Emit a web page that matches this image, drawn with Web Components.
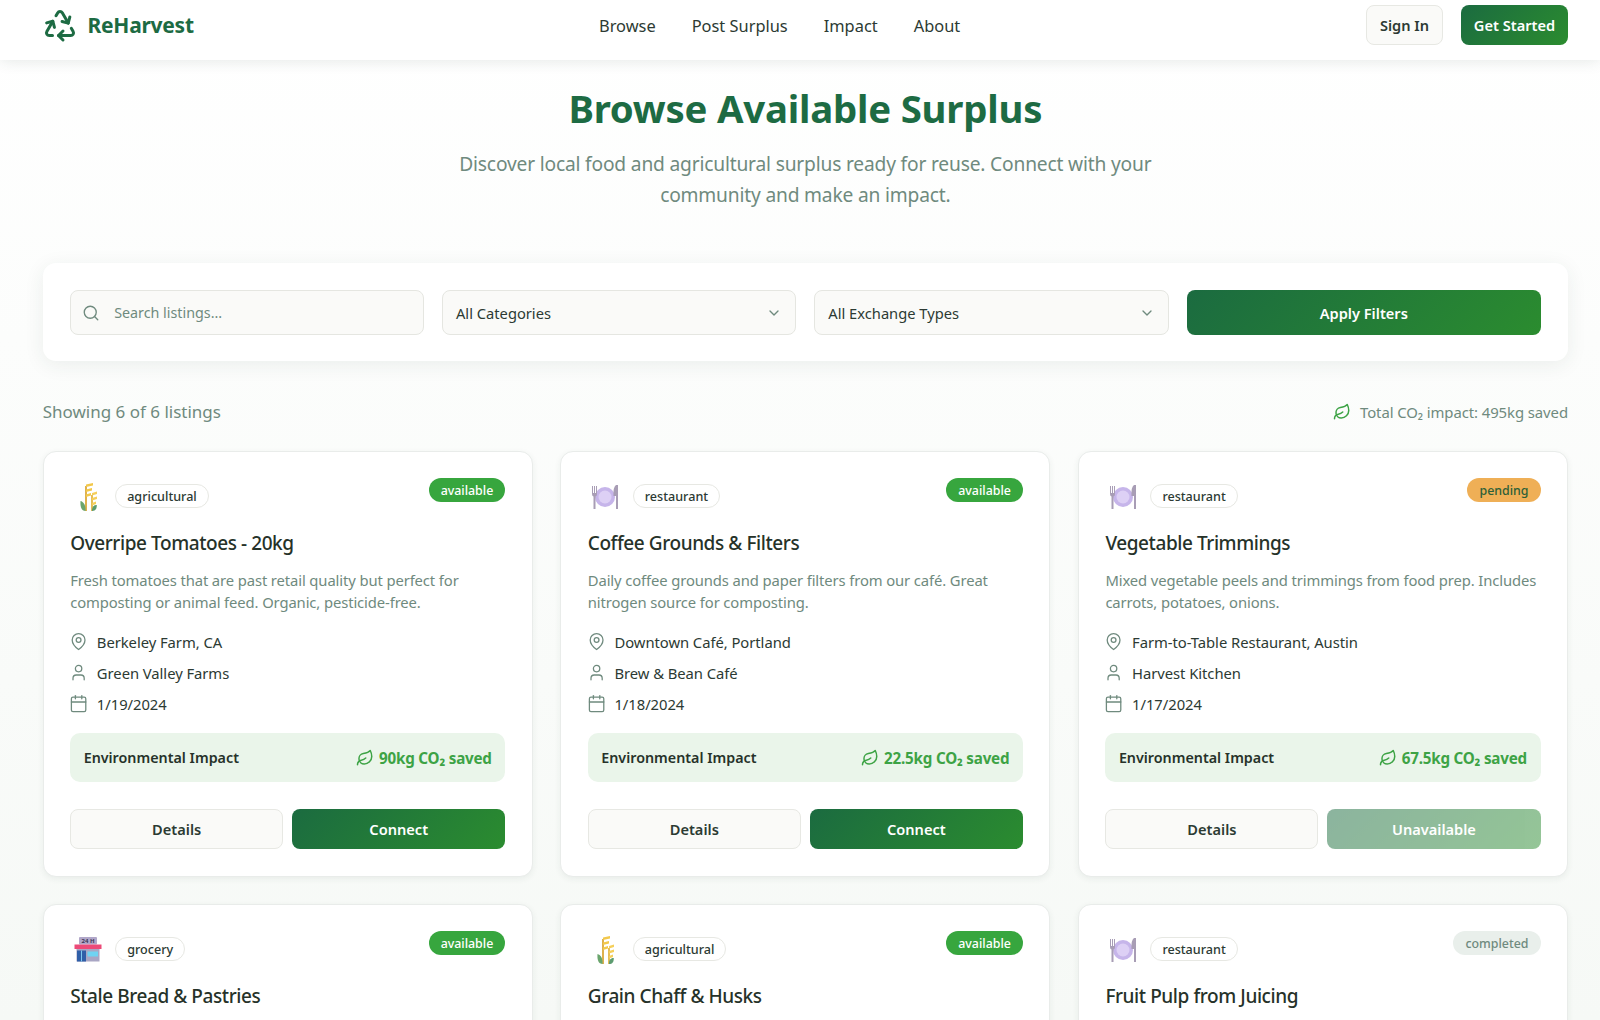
<!DOCTYPE html>
<html lang="en"><head><meta charset="utf-8"><title>ReHarvest</title>
<style>
html,body{margin:0;height:1020px;overflow:hidden}
body{font-family:"Noto Sans","Open Sans",sans-serif;color:#2c3a33;background:linear-gradient(180deg,#fff 0,#f6f9f6 1020px)}
main{display:block;padding:0 32px 0 42.67px}
</style></head><body>
<app-header></app-header>
<main>
<hero-section></hero-section>
<filter-bar></filter-bar>
<results-summary></results-summary>
<listing-grid>
<listing-card kind="wheat" category="agricultural" status="available" name="Overripe Tomatoes - 20kg" desc="Fresh tomatoes that are past retail quality but perfect for composting or animal feed. Organic, pesticide-free." place="Berkeley Farm, CA" owner="Green Valley Farms" date="1/19/2024" co2="90kg"></listing-card>
<listing-card kind="plate" category="restaurant" status="available" name="Coffee Grounds &amp; Filters" desc="Daily coffee grounds and paper filters from our café. Great nitrogen source for composting." place="Downtown Café, Portland" owner="Brew &amp; Bean Café" date="1/18/2024" co2="22.5kg"></listing-card>
<listing-card kind="plate" category="restaurant" status="pending" name="Vegetable Trimmings" desc="Mixed vegetable peels and trimmings from food prep. Includes carrots, potatoes, onions." place="Farm-to-Table Restaurant, Austin" owner="Harvest Kitchen" date="1/17/2024" co2="67.5kg"></listing-card>
<listing-card kind="store" category="grocery" status="available" name="Stale Bread &amp; Pastries" partial></listing-card>
<listing-card kind="wheat" category="agricultural" status="available" name="Grain Chaff &amp; Husks" partial></listing-card>
<listing-card kind="plate" category="restaurant" status="completed" name="Fruit Pulp from Juicing" partial></listing-card>
</listing-grid>
</main>
<script>
const P={
recycle:'<path d="M7 19H4.815a1.83 1.83 0 0 1-1.57-.881 1.785 1.785 0 0 1-.004-1.784L7.196 9.5"/><path d="M11 19h8.203a1.83 1.83 0 0 0 1.556-.89 1.784 1.784 0 0 0 0-1.775l-1.226-2.12"/><path d="m14 16-3 3 3 3"/><path d="M8.293 13.596 7.196 9.5 3.1 10.598"/><path d="m9.344 5.811 1.093-1.892A1.83 1.83 0 0 1 11.985 3a1.784 1.784 0 0 1 1.546.888l3.943 6.843"/><path d="m13.378 9.633 4.096 1.098 1.097-4.096"/>',
leaf:'<path d="M11 20A7 7 0 0 1 9.8 6.1C15.5 5 17 4.48 19 2c1 2 2 4.18 2 8 0 5.5-4.78 10-10 10Z"/><path d="M2 21c0-3 1.85-5.36 5.08-6C9.5 14.52 12 13 13 12"/>',
pin:'<path d="M20 10c0 6-8 12-8 12s-8-6-8-12a8 8 0 0 1 16 0Z"/><circle cx="12" cy="10" r="3"/>',
user:'<path d="M19 21v-2a4 4 0 0 0-4-4H9a4 4 0 0 0-4 4v2"/><circle cx="12" cy="7" r="4"/>',
cal:'<path d="M8 2v4"/><path d="M16 2v4"/><rect width="18" height="18" x="3" y="4" rx="2"/><path d="M3 10h18"/>',
search:'<circle cx="11" cy="11" r="8"/><path d="m21 21-4.3-4.3"/>',
chev:'<path d="m6 9 6 6 6-6"/>'};
const ic=(n,s,c,w=2)=>`<svg width="${s}" height="${s}" viewBox="0 0 24 24" fill="none" stroke="${c}" stroke-width="${w}" stroke-linecap="round" stroke-linejoin="round" style="flex:none;display:block">${P[n]}</svg>`;
const EMOJI={
wheat:`<svg width="32" height="32" viewBox="0 0 32 32" style="display:block"><path d="M14 30V5" stroke="#dba93a" stroke-width="1.800"/><path d="M20 30V14" stroke="#e2b646" stroke-width="1.800"/><path d="M14 3.500l7-1.500v2.600l-7 1.500zM14 8.500l6-1.500v2.600l-6 1.500zM14 13.500l5-1.500v2.600l-5 1.500z" fill="#f2c84b"/><path d="M20 12l5-1.500v2.600l-5 1.500zM20 17l5-1.500v2.600l-5 1.500zM20 22l4-1.500v2.600l-4 1.500z" fill="#f5cf5a"/><path d="M13.500 30c-4 0-5.500-4-5-10 3 .8 5.500 4 5 10z" fill="#6aa56d"/><path d="M20 30c3.500 0 4.800-2 4.800-6-3-.2-5 2-4.800 6z" fill="#5d9c70"/></svg>`,
plate:`<svg width="32" height="32" viewBox="0 0 32 32" style="display:block"><circle cx="16" cy="16" r="10" fill="#c6b5ea"/><circle cx="16" cy="16" r="6.500" fill="#ddd0f5"/><path d="M3 5v8q0 2 1.500 2.500V28h2V15.500Q8 15 8 13V5H7v7H6V5H5v7H4V5z" fill="#a89db5"/><path d="M27 4q-3 2-2.500 11H27v13h2V4z" fill="#a89db5"/></svg>`,
store:`<svg width="32" height="32" viewBox="0 0 32 32" style="display:block"><rect x="7" y="3" width="18" height="7.500" rx="1" fill="#b1a7c9"/><text x="16" y="9" text-anchor="middle" font-family="Noto Sans,sans-serif" font-weight="700" font-size="6" fill="#3f3556">24 H</text><rect x="2.500" y="10.500" width="27" height="4.500" fill="#ec4a78"/><rect x="4.500" y="15" width="23" height="12.500" fill="#a9a6c4"/><rect x="5" y="16.500" width="9" height="11" fill="#2f5fa8"/><rect x="9" y="16.500" width="1" height="11" fill="#7fc8ee"/><rect x="15.500" y="17.500" width="10.500" height="5" fill="#6fd3f2"/></svg>`};
function def(name,cls){customElements.define(name,cls)}
function shadow(el,html){el.attachShadow({mode:'open'}).innerHTML=html}
const GRAD='linear-gradient(135deg,#1b6b40,#2b8c2f)';

def('rh-button',class extends HTMLElement{constructor(){super();shadow(this,`<style>
:host{display:flex;align-items:center;justify-content:center;box-sizing:border-box;border-radius:8px;font-size:14.600px;font-weight:600;height:40px;white-space:nowrap}
:host([variant=primary]){background:${GRAD};color:#fff}
:host([variant=ghost]){background:#fafaf8;border:1px solid #e7e8e3;color:#2c3a33}
:host([variant=muted]){background:${GRAD};opacity:.5;color:#fff}
</style><slot></slot>`)}});

def('app-header',class extends HTMLElement{constructor(){super();shadow(this,`<style>
:host{display:flex;align-items:center;height:60px;background:#fff;padding:0 32px 11px 42px;box-shadow:0 1px 14px rgba(40,70,55,.12);position:relative;box-sizing:border-box}
.logo{display:flex;align-items:center;gap:9.500px;color:#1d6b43;font-weight:700;font-size:21px;letter-spacing:-.25px;width:557px;flex:none;margin-top:1px}
nav{display:flex;gap:36px;font-size:16.400px;color:#2c3a33;margin-top:2px}
.act{display:flex;gap:18px;margin-left:auto}
.si{width:77px}.gs{width:107px}
</style><div class="logo">${ic('recycle',36,'#1d6b43',2)}<span>ReHarvest</span></div>
<nav><span>Browse</span><span>Post Surplus</span><span>Impact</span><span>About</span></nav>
<div class="act"><rh-button class="si" variant="ghost">Sign In</rh-button><rh-button class="gs" variant="primary">Get Started</rh-button></div>`)}});

def('hero-section',class extends HTMLElement{constructor(){super();shadow(this,`<style>
:host{display:block;text-align:center;padding-top:20px;height:203px;box-sizing:border-box}
h1{margin:0;font-size:38.400px;line-height:56px;font-weight:700;color:#1d6b43;letter-spacing:-.23px}
p{margin:12px auto 0;width:720px;font-size:19.200px;line-height:31px;color:#6f8a7e;letter-spacing:-.18px}
</style><h1>Browse Available Surplus</h1><p>Discover local food and agricultural surplus ready for reuse. Connect with your community and make an impact.</p>`)}});

def('filter-bar',class extends HTMLElement{constructor(){super();shadow(this,`<style>
:host{display:grid;grid-template-columns:repeat(4,1fr);gap:18px;background:#fff;border-radius:13px;padding:27px;height:98px;box-sizing:border-box;box-shadow:0 4px 20px rgba(40,70,55,.08)}
.f{display:flex;align-items:center;box-sizing:border-box;height:45px;border:1px solid #e5e6e1;border-radius:8px;background:#fafaf8;font-size:14.700px;padding:0 13px;color:#2c3a33;justify-content:space-between}
.s{justify-content:flex-start;gap:14px;color:#6f8a7e;font-size:14.300px}
.s svg{margin-left:-1.500px}
rh-button{height:45px}
</style><div class="f s">${ic('search',18,'#6f8a7e',1.800)}<span>Search listings...</span></div>
<div class="f"><span>All Categories</span>${ic('chev',16,'#6f8a7e')}</div>
<div class="f"><span>All Exchange Types</span>${ic('chev',16,'#6f8a7e')}</div>
<rh-button variant="primary">Apply Filters</rh-button>`)}});

def('results-summary',class extends HTMLElement{constructor(){super();shadow(this,`<style>
:host{display:flex;align-items:center;justify-content:space-between;height:90px;padding-top:11px;box-sizing:border-box;color:#6f8a7e;font-size:17px}
.r{display:flex;align-items:center;gap:9px;font-size:14.900px;letter-spacing:-.08px}
</style><span>Showing 6 of 6 listings</span><span class="r">${ic('leaf',18,'#3da345')}<span>Total CO₂ impact: 495kg saved</span></span>`)}});

def('listing-grid',class extends HTMLElement{constructor(){super();shadow(this,`<style>
:host{display:grid;grid-template-columns:repeat(3,1fr);gap:27px 27.500px}
</style><slot></slot>`)}});

def('listing-card',class extends HTMLElement{connectedCallback(){
const a=n=>this.getAttribute(n)||'';
const st=a('status'),partial=this.hasAttribute('partial');
const rest=partial?'':`<p>${a('desc')}</p>
<div class="m"><div>${ic('pin',19.200,'#6f8a7e',1.600)}<span>${a('place')}</span></div><div>${ic('user',19.200,'#6f8a7e',1.600)}<span>${a('owner')}</span></div><div>${ic('cal',19.200,'#6f8a7e',1.600)}<span>${a('date')}</span></div></div>
<div class="imp"><span class="l">Environmental Impact</span><span class="v">${ic('leaf',18,'#3da345')}<span>${a('co2')} CO₂ saved</span></span></div>
<div class="b"><rh-button variant="ghost">Details</rh-button><rh-button variant="${st==='available'?'primary':'muted'}">${st==='available'?'Connect':'Unavailable'}</rh-button></div>`;
shadow(this,`<style>
:host{display:block;box-sizing:border-box;height:426px;background:#fff;border:1px solid #e9ecea;border-radius:13px;padding:27px 26.500px;box-shadow:0 2px 6px rgba(40,70,55,.07);position:relative}
.t{display:flex;align-items:center;gap:10px;height:34px}
.e{width:35px;height:32px;display:flex;justify-content:center;margin-top:2px}
.c{height:24px;box-sizing:border-box;padding:0 11px;border:1px solid #e7e8e3;border-radius:12px;font-size:12.600px;font-weight:500;color:#2c3a33;display:flex;align-items:center}
.s{position:absolute;top:26px;right:26.500px;height:24px;padding:0 12px;border-radius:12px;font-size:12.400px;font-weight:500;display:flex;align-items:center}
.available{background:#37a63e;color:#fff}.pending{background:#efaf56;color:#2d5f38}.completed{background:#e9efeb;color:#6f8a7e}
h3{margin:16px 0 0;font-size:19px;line-height:28px;font-weight:500;color:#263229;letter-spacing:-.42px}
p{margin:12px 0 0;font-size:14.800px;line-height:22.400px;color:#6f8a7e;height:45px;letter-spacing:-.11px}
.m{margin-top:17px;display:flex;flex-direction:column;gap:10px;font-size:14.800px;letter-spacing:-.05px;color:#2c3a33}
.m div{display:flex;align-items:center;gap:8.500px;height:21px}
.m svg{margin-left:-1px}
.imp{margin-top:19px;height:49px;background:#eaf5ea;border-radius:10px;display:flex;align-items:center;justify-content:space-between;padding:0 13.500px;font-size:14.300px;color:#263229}
.l{font-weight:600}
.v{display:flex;align-items:center;gap:5px;color:#3da345;font-weight:700;font-size:15.200px;letter-spacing:-.2px}
.b{margin-top:27px;display:grid;grid-template-columns:1fr 1fr;gap:9px}
</style><div class="t"><div class="e">${EMOJI[a('kind')]}</div><span class="c">${a('category')}</span></div>
<span class="s ${st}">${st}</span><h3>${a('name')}</h3>${rest}`)}});
</script>
</body></html>
